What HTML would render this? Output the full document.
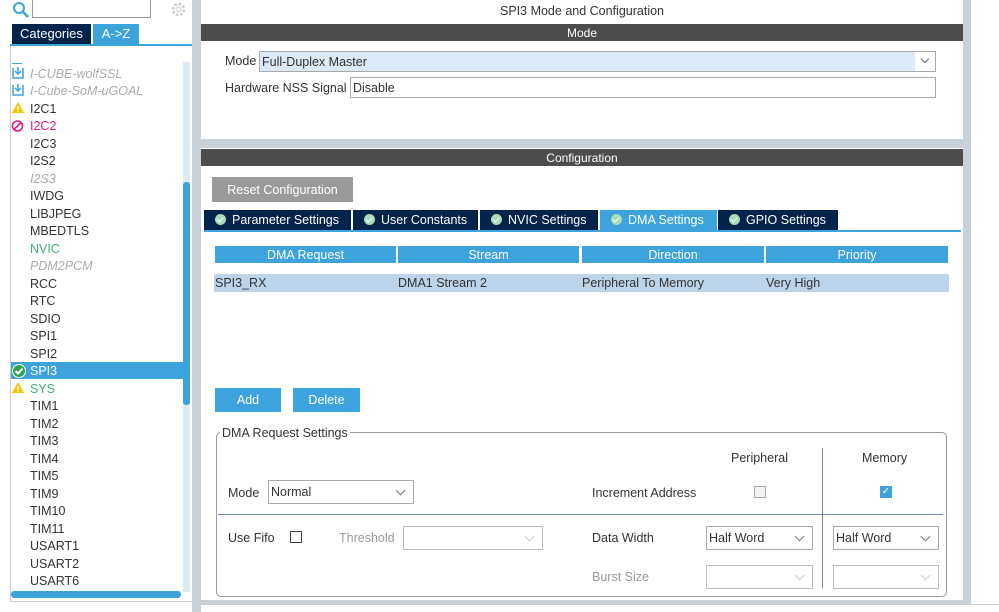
<!DOCTYPE html>
<html><head><meta charset="utf-8"><style>
*{box-sizing:border-box;margin:0;padding:0}
body{width:999px;height:612px;position:relative;overflow:hidden;background:#fff;font-family:"Liberation Sans",Arial,sans-serif;font-size:12px;color:#333}
.a{position:absolute}
.it{position:absolute;left:30px;font-size:12.5px;color:#333;line-height:17px;white-space:nowrap;margin-top:1px}
.hdr{position:absolute;background:#4d4d4d;color:#fff;text-align:center;font-size:12px;line-height:16px}
.tab{position:absolute;top:210px;height:20px;background:#03234b;color:#fff;font-size:12.5px;line-height:21px;padding-left:11px;white-space:nowrap}
.tab i{display:inline-block;width:11px;height:11px;border-radius:50%;background:#a8dcb8;margin-right:6px;vertical-align:-1px;position:relative}
.tab i:after{content:"";position:absolute;left:3px;top:2px;width:3px;height:5px;border-right:1.5px solid #fff;border-bottom:1.5px solid #fff;transform:rotate(45deg)}
.th{position:absolute;top:246px;height:17px;background:#3ca3dc;color:#fff;text-align:center;line-height:18px;font-size:12.5px}
.td{position:absolute;top:274px;height:18px;background:#bcd3ea;line-height:19px;font-size:12.5px;padding-left:1px}
.sel{position:absolute;height:24px;border:1px solid #aaa;background:#fff;font-size:12.5px;line-height:23px;padding-left:2px}
.sel:after{content:"";position:absolute;right:9px;top:6px;width:6px;height:6px;border-right:1px solid #777;border-bottom:1px solid #777;transform:rotate(45deg)}
.sel.d{border-color:#bbb}.sel.d:after{border-color:#ccc}
.btn{position:absolute;background:#3ca3dc;color:#fff;text-align:center;font-size:12.5px}
.t{position:absolute;font-size:12.5px;margin-top:1px}
</style></head><body>
<div class="a" style="left:192px;top:0;width:9px;height:612px;background:#c8d0d8"></div>
<svg class="a" style="left:12px;top:1px" width="18" height="18"><circle cx="7" cy="7" r="5" fill="none" stroke="#3ca3dc" stroke-width="2"/><line x1="11" y1="11" x2="16" y2="16" stroke="#3ca3dc" stroke-width="2.5"/></svg>
<div class="a" style="left:32px;top:0;width:119px;height:18px;border:1px solid #999;border-top:none"></div>
<svg class="a" style="left:170px;top:1px" width="17" height="17"><circle cx="8.5" cy="8.5" r="5.5" fill="none" stroke="#ccc" stroke-width="2.5" stroke-dasharray="2.5 1.8"/><circle cx="8.5" cy="8.5" r="2.5" fill="none" stroke="#ccc"/></svg>
<div class="a" style="left:12px;top:24px;width:79px;height:20px;background:#03234b;color:#fff;font-size:13px;line-height:20px;padding-left:8px">Categories</div>
<div class="a" style="left:93px;top:24px;width:46px;height:20px;background:#3ca3dc;color:#fff;font-size:13px;line-height:20px;text-align:center">A-&gt;Z</div>
<div class="a" style="left:10px;top:44px;width:182px;height:2px;background:#3ca3dc"></div>
<div class="a" style="left:10px;top:46px;width:1px;height:556px;background:#ccc"></div>
<div class="a" style="left:10px;top:601px;width:182px;height:1px;background:#ccc"></div>
<div class="a" style="left:183px;top:62px;width:7px;height:530px;background:#dceaf6"></div>
<div class="a" style="left:183px;top:182px;width:7px;height:223px;background:#3ca3dc;border-radius:3px"></div>
<div class="a" style="left:11px;top:591px;width:170px;height:7px;background:#3ca3dc;border-radius:3px"></div>
<div class="a" style="left:11px;top:362px;width:172px;height:17px;background:#3ca3dc"></div>
<div class="a" style="left:12px;top:63px;width:10px;height:1px;background:#3ca3dc"></div>
<svg class="a" style="left:11px;top:65px" width="14" height="50"><g fill="none" stroke="#3ca3dc" stroke-width="1.5"><path d="M2 3v10h10V3"/><path d="M7 2v7M4 6l3 3 3-3"/><path d="M2 20v10h10V20"/><path d="M7 19v7M4 23l3 3 3-3"/></g></svg>
<svg class="a" style="left:11px;top:101px" width="14" height="14"><path d="M7 1L13 12H1Z" fill="#f5c400"/><rect x="6.3" y="5" width="1.4" height="4" fill="#fff"/><rect x="6.3" y="10" width="1.4" height="1.2" fill="#fff"/></svg>
<svg class="a" style="left:11px;top:119px" width="14" height="14"><circle cx="6.5" cy="7" r="5" fill="none" stroke="#e2187f" stroke-width="1.6"/><line x1="3" y1="10.5" x2="10" y2="3.5" stroke="#e2187f" stroke-width="1.6"/></svg>
<svg class="a" style="left:11px;top:363px" width="16" height="16"><circle cx="8" cy="8" r="7" fill="#fff"/><circle cx="8" cy="8" r="6" fill="#2ea44f"/><path d="M4.5 8l2.5 2.5 4.5-5" stroke="#fff" stroke-width="2" fill="none"/></svg>
<svg class="a" style="left:11px;top:381px" width="14" height="14"><path d="M7 1L13 12H1Z" fill="#f5c400"/><rect x="6.3" y="5" width="1.4" height="4" fill="#fff"/><rect x="6.3" y="10" width="1.4" height="1.2" fill="#fff"/></svg>
<div class="it" style="top:65px;color:#aaa;font-style:italic">I-CUBE-wolfSSL</div>
<div class="it" style="top:82px;color:#aaa;font-style:italic">I-Cube-SoM-uGOAL</div>
<div class="it" style="top:100px">I2C1</div>
<div class="it" style="top:117px;color:#e2187f">I2C2</div>
<div class="it" style="top:135px">I2C3</div>
<div class="it" style="top:152px">I2S2</div>
<div class="it" style="top:170px;color:#aaa;font-style:italic">I2S3</div>
<div class="it" style="top:187px">IWDG</div>
<div class="it" style="top:205px">LIBJPEG</div>
<div class="it" style="top:222px">MBEDTLS</div>
<div class="it" style="top:240px;color:#3cb371">NVIC</div>
<div class="it" style="top:257px;color:#aaa;font-style:italic">PDM2PCM</div>
<div class="it" style="top:275px">RCC</div>
<div class="it" style="top:292px">RTC</div>
<div class="it" style="top:310px">SDIO</div>
<div class="it" style="top:327px">SPI1</div>
<div class="it" style="top:345px">SPI2</div>
<div class="it" style="top:362px;color:#fff">SPI3</div>
<div class="it" style="top:380px;color:#3cb371">SYS</div>
<div class="it" style="top:397px">TIM1</div>
<div class="it" style="top:415px">TIM2</div>
<div class="it" style="top:432px">TIM3</div>
<div class="it" style="top:450px">TIM4</div>
<div class="it" style="top:467px">TIM5</div>
<div class="it" style="top:485px">TIM9</div>
<div class="it" style="top:502px">TIM10</div>
<div class="it" style="top:520px">TIM11</div>
<div class="it" style="top:537px">USART1</div>
<div class="it" style="top:555px">USART2</div>
<div class="it" style="top:572px">USART6</div>
<div class="a" style="left:963px;top:0;width:8px;height:604px;background:#c8d0d8"></div>
<div class="a" style="left:201px;top:139px;width:762px;height:9px;background:#c8d0d8"></div>
<div class="a" style="left:201px;top:600px;width:762px;height:4px;background:#c8d0d8"></div>
<div class="a" style="left:201px;top:604px;width:798px;height:1px;background:#ccc"></div>
<div class="a" style="left:201px;top:4px;width:762px;text-align:center;font-size:12.5px">SPI3 Mode and Configuration</div>
<div class="hdr" style="left:201px;top:24px;width:762px;height:17px;line-height:18px">Mode</div>
<div class="t" style="left:225px;top:53px">Mode</div>
<div class="a" style="left:259px;top:51px;width:677px;height:21px;border:1px solid #aaa;background:#dce9f6;font-size:12.5px;line-height:20px;padding-left:2px">Full-Duplex Master<div class="a" style="right:0;top:0;width:20px;height:19px;background:#fff"></div><div class="a" style="right:7px;top:4px;width:6px;height:6px;border-right:1px solid #666;border-bottom:1px solid #666;transform:rotate(45deg)"></div></div>
<div class="t" style="left:225px;top:80px">Hardware NSS Signal</div>
<div class="a" style="left:350px;top:77px;width:586px;height:21px;border:1px solid #aaa;font-size:12.5px;line-height:20px;padding-left:2px">Disable</div>
<div class="hdr" style="left:201px;top:149px;width:762px;height:17px;line-height:18px">Configuration</div>
<div class="a" style="left:212px;top:177px;width:141px;height:25px;background:#9a9a9a;color:#fff;font-size:12.5px;line-height:26px;text-align:center">Reset Configuration</div>
<div class="tab" style="left:204px;width:147px"><i></i>Parameter Settings</div>
<div class="tab" style="left:353px;width:125px"><i></i>User Constants</div>
<div class="tab" style="left:480px;width:118px"><i></i>NVIC Settings</div>
<div class="tab" style="left:600px;width:117px;background:#3ca3dc"><i></i>DMA Settings</div>
<div class="tab" style="left:718px;width:120px"><i></i>GPIO Settings</div>
<div class="a" style="left:204px;top:230px;width:757px;height:2px;background:#3ca3dc"></div>
<div class="th" style="left:215px;width:181px">DMA Request</div>
<div class="th" style="left:398px;width:181px">Stream</div>
<div class="th" style="left:582px;width:182px">Direction</div>
<div class="th" style="left:766px;width:182px">Priority</div>
<div class="td" style="left:214px;width:183px">SPI3_RX</div>
<div class="td" style="left:397px;width:184px">DMA1 Stream 2</div>
<div class="td" style="left:581px;width:184px">Peripheral To Memory</div>
<div class="td" style="left:765px;width:184px">Very High</div>
<div class="btn" style="left:215px;top:388px;width:66px;height:24px;line-height:25px">Add</div>
<div class="btn" style="left:293px;top:388px;width:67px;height:24px;line-height:25px">Delete</div>
<div class="a" style="left:216px;top:432px;width:731px;height:165px;border:1px solid #999;border-radius:5px"></div>
<div class="a" style="left:220px;top:426px;background:#fff;padding:0 2px;font-size:12.5px">DMA Request Settings</div>
<div class="t" style="left:731px;top:450px">Peripheral</div>
<div class="t" style="left:862px;top:450px">Memory</div>
<div class="a" style="left:822px;top:448px;width:1px;height:140px;background:#6c86b8"></div>
<div class="a" style="left:218px;top:514px;width:725px;height:1px;background:#6c86b8"></div>
<div class="t" style="left:228px;top:485px">Mode</div>
<div class="sel" style="left:268px;top:480px;width:146px">Normal</div>
<div class="t" style="left:592px;top:485px">Increment Address</div>
<div class="a" style="left:754px;top:486px;width:12px;height:12px;border:1px solid #aaa;background:#f2f2f2"></div>
<div class="a" style="left:880px;top:486px;width:12px;height:12px;background:#3ca3dc;color:#fff;font-size:10px;line-height:12px;text-align:center">✓</div>
<div class="t" style="left:228px;top:530px">Use Fifo</div>
<div class="a" style="left:290px;top:531px;width:12px;height:12px;border:1px solid #444"></div>
<div class="t" style="left:339px;top:530px;color:#999">Threshold</div>
<div class="sel d" style="left:403px;top:526px;width:140px"></div>
<div class="t" style="left:592px;top:530px">Data Width</div>
<div class="sel" style="left:706px;top:526px;width:107px">Half Word</div>
<div class="sel" style="left:833px;top:526px;width:106px">Half Word</div>
<div class="t" style="left:592px;top:569px;color:#999">Burst Size</div>
<div class="sel d" style="left:706px;top:565px;width:107px"></div>
<div class="sel d" style="left:833px;top:565px;width:106px"></div>
</body></html>
